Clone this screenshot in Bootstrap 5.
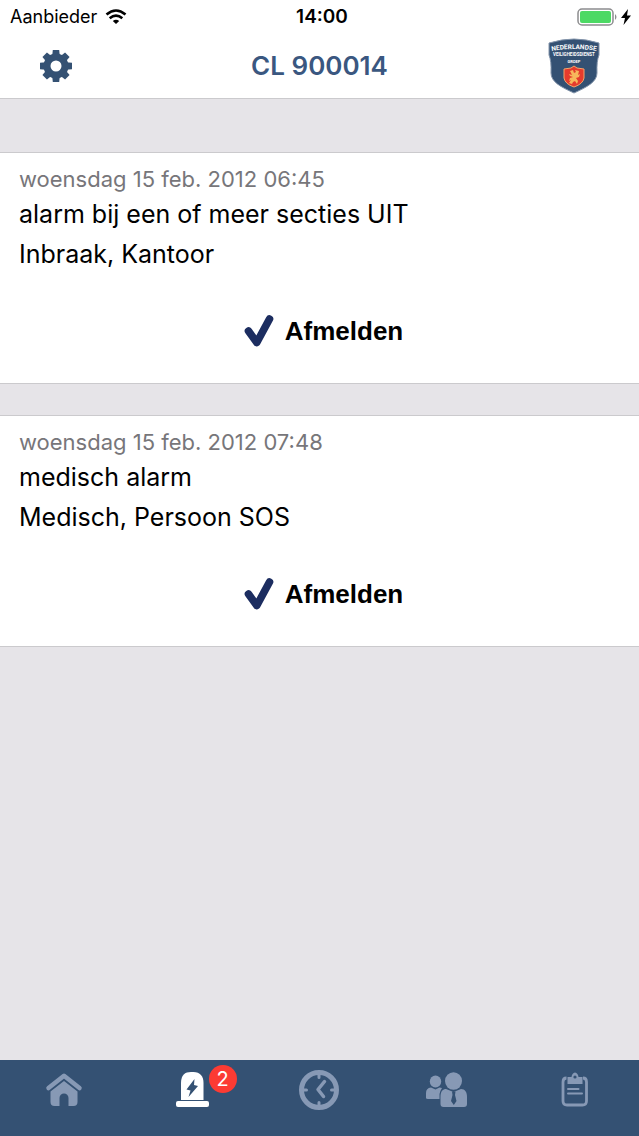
<!DOCTYPE html>
<html lang="nl">
<head>
<meta charset="utf-8">
<meta name="viewport" content="width=device-width, initial-scale=1">
<title>CL 900014</title>
<link rel="stylesheet" href="https://cdn.jsdelivr.net/npm/bootstrap@5.3.0/dist/css/bootstrap.min.css">
<style>
  :root { --brand: #345173; --line: #cbcacd; --canvas: #e6e4e8; }
  body { font-family: Inter, "Liberation Sans", sans-serif; color: #000; background: var(--canvas); }
  svg { display: block; flex: none; }
  .status-bar { height: 33px; font-size: 18px; line-height: 33px; padding: 0 8px 0 10px; }
  .clock { font-size: 19px; padding-left: 3px; }
  .title-bar { min-height: 66px; border-bottom: 1px solid var(--line); padding: 0 39px; }
  .title-bar h1 { font-size: 26px; line-height: 32px; color: #3a5780; }
  .icon-btn { color: var(--brand); border: 0; }
  .alarms { padding-top: 53px; gap: 31px; }
  .alarm { min-height: 232px; border: solid var(--line); border-width: 1px 0; padding: 10px 19px 0; font-size: 25px; line-height: 40px; }
  .alarm time { font-size: 22px; line-height: 32px; color: #77767a; }
  .alarm h2 { font-size: 25px; line-height: 40px; margin-top: -1px; }
  .sign-off { font: bold 26px/40px "Liberation Sans", Arial, sans-serif; gap: 11px; margin-top: 37px; padding: 0 0 0 8px; border: 0; }
  .tab-bar { height: 76px; background: var(--brand); }
  .tab-bar a { color: #8799b5; padding-top: 9px; }
  .tab-bar a.active { color: #fff; }
  .count { left: 50%; top: 5px; margin-left: 17px; width: 28px; height: 28px; font-size: 20px; line-height: 28px; background: #fc3b33; color: #fff; }
</style>
</head>
<body class="d-flex flex-column min-vh-100">
<header class="bg-white">
  <div class="status-bar row g-0">
    <div class="col d-flex align-items-center gap-2">
      <span>Aanbieder</span>
      <svg width="22" height="16" viewBox="0 0 22 16" fill="none" stroke="#000" stroke-width="2.600" role="img" aria-label="Wifi">
        <path d="M1.500 5.500Q11-2.500 20.500 5.500M4.700 9.300Q11 4 17.300 9.300"/><path d="M7.800 12Q11 9.300 14.200 12L11 15Z" fill="#000" stroke="none"/>
      </svg>
    </div>
    <div class="clock col-auto fw-semibold">14:00</div>
    <div class="col d-flex align-items-center justify-content-end gap-1">
      <svg width="40" height="18" viewBox="0 0 40 18" role="img" aria-label="Batterij vol">
        <rect x="1" y="1" width="35" height="16" rx="4" fill="#fff" stroke="#8c8c8e" stroke-width="1.500"/>
        <rect x="3" y="3" width="31" height="12" rx="2" fill="#4cd964"/><path d="M38 6q3 3 0 6z" fill="#8c8c8e"/>
      </svg>
      <svg width="10" height="16" viewBox="0 0 10 16" aria-hidden="true"><path d="M7 0 0 9h4L2.500 16 10 6.500H6z"/></svg>
    </div>
  </div>
  <div class="title-bar row g-0 align-items-center">
    <div class="col">
      <button type="button" class="icon-btn d-block bg-transparent p-0" aria-label="Instellingen">
        <svg width="34" height="34" viewBox="-17 -17 34 34" fill="currentColor">
          <defs><path id="tooth" d="M-3.800-10 L-3.200-16 H3.200 L3.800-10Z"/></defs>
          <circle r="9" fill="none" stroke="currentColor" stroke-width="7"/>
          <use href="#tooth"/><use href="#tooth" transform="rotate(45)"/><use href="#tooth" transform="rotate(90)"/><use href="#tooth" transform="rotate(135)"/><use href="#tooth" transform="rotate(180)"/><use href="#tooth" transform="rotate(225)"/><use href="#tooth" transform="rotate(270)"/><use href="#tooth" transform="rotate(315)"/>
        </svg>
      </button>
    </div>
    <h1 class="col-auto m-0 fw-semibold">CL 900014</h1>
    <div class="col d-flex justify-content-end">
      <svg width="52" height="56" viewBox="0 0 52 56" role="img" aria-label="Nederlandse Veiligheidsdienst Groep">
        <path d="M1 5Q14 1 26 1T51 5V17Q48.500 23 49 35C49 44 39 49 26 55C13 49 3 44 3 35Q3.500 23 1 17Z" fill="#345173" stroke="#8495ab" stroke-width="1"/>
        <g fill="#fff" font-family="Roboto, sans-serif" font-weight="700">
          <path id="arc" d="M1 13.500Q26 8.500 51 13.500" fill="none"/>
          <text font-size="6.500" text-anchor="middle"><textPath href="#arc" startOffset="50%">NEDERLANDSE</textPath></text>
          <text x="26" y="18" font-size="4.500" text-anchor="middle">VEILIGHEIDSDIENST</text>
          <text x="26" y="24.500" font-size="4" text-anchor="middle">GROEP</text>
        </g>
        <path d="M26 28 29 30 36 31V40Q35 46 26 49Q17 46 16 40V31L23 30Z" fill="#e53b2d" stroke="#f3a46a" stroke-width="1"/>
        <path d="M22 33l3-1 1 3 2-1-1-2 4 1-1 4 2-1-1 3-3 1 2 3-1 3-2-3-2 1-1 2-3-1 2-3-2 1 1-3 3-1-3-1-1-2 3 1z" fill="#f7b75b"/>
      </svg>
    </div>
  </div>
</header>

<main class="alarms flex-grow-1 d-flex flex-column">
  <article class="alarm bg-white">
    <time class="d-block" datetime="2012-02-15T06:45">woensdag 15 feb. 2012 06:45</time>
    <h2 class="mb-0 fw-normal">alarm bij een of meer secties UIT</h2>
    <p class="mb-0">Inbraak, Kantoor</p>
    <button type="button" class="sign-off d-flex align-items-center mx-auto bg-transparent">
      <svg width="30" height="34" viewBox="0 0 30 34" fill="none" stroke="#1c2d60" stroke-width="7.600" stroke-linecap="round" stroke-linejoin="round" aria-hidden="true"><path d="M4.500 17 12.800 28.500 25.500 5"/></svg>
      Afmelden
    </button>
  </article>
  <article class="alarm bg-white">
    <time class="d-block" datetime="2012-02-15T07:48">woensdag 15 feb. 2012 07:48</time>
    <h2 class="mb-0 fw-normal">medisch alarm</h2>
    <p class="mb-0">Medisch, Persoon SOS</p>
    <button type="button" class="sign-off d-flex align-items-center mx-auto bg-transparent">
      <svg width="30" height="34" viewBox="0 0 30 34" fill="none" stroke="#1c2d60" stroke-width="7.600" stroke-linecap="round" stroke-linejoin="round" aria-hidden="true"><path d="M4.500 17 12.800 28.500 25.500 5"/></svg>
      Afmelden
    </button>
  </article>
</main>

<nav class="tab-bar d-flex sticky-bottom" aria-label="Hoofdmenu">
  <a href="#home" class="flex-fill w-100 d-flex justify-content-center" aria-label="Home">
    <svg width="42" height="42" viewBox="0 0 42 42" fill="currentColor">
      <path d="M5.500 19 21 6.800 36.500 19" fill="none" stroke="currentColor" stroke-width="4.500" stroke-linecap="round" stroke-linejoin="round"/>
      <path d="M7.500 22.500 21 12 34.500 22.500V33a4 4 0 0 1-4 4H25.500V29a4.500 4.500 0 0 0-9 0V37H11.500a4 4 0 0 1-4-4Z"/>
    </svg>
  </a>
  <a href="#alarmen" class="active flex-fill w-100 d-flex justify-content-center position-relative" aria-label="Alarmen" aria-current="page">
    <svg width="42" height="42" viewBox="0 0 42 42" fill="currentColor">
      <path d="M10 31V14C10 6 14 3 20 3h2.500C29 3 32.500 7 32.500 14V31Z"/><rect x="5" y="32" width="33" height="6" rx="2"/>
      <path d="M23.500 10 15.500 20.500l4 1L17.500 28l9.500-11-4-1Z" fill="#345173"/>
    </svg>
    <span class="count position-absolute rounded-circle text-center">2</span>
  </a>
  <a href="#historie" class="flex-fill w-100 d-flex justify-content-center" aria-label="Historie">
    <svg width="42" height="42" viewBox="0 0 42 42" fill="none" stroke="currentColor">
      <circle cx="21" cy="21" r="17.500" stroke-width="5"/>
      <path d="M21 5v3.500M21 33.500V37M5 21h3.500M33.500 21H37" stroke-width="3" stroke-linecap="round"/>
      <path d="M26.500 12.500 20 20.500 25.500 27.500" stroke-width="3.500" stroke-linecap="round" stroke-linejoin="round"/>
    </svg>
  </a>
  <a href="#contacten" class="flex-fill w-100 d-flex justify-content-center" aria-label="Contacten">
    <svg width="42" height="42" viewBox="0 0 42 42" fill="currentColor">
      <ellipse cx="9.500" cy="12.500" rx="5.700" ry="6"/><path d="M0 29V24q0-5 5-5.500l4.500 2 4-2 2.500.5q-2 3-2.500 6V30H2Q0 30 0 29Z"/>
      <ellipse cx="27.500" cy="12" rx="8.500" ry="8.800"/>
      <path d="M14.500 35V28C14.500 22 17 20 20 20l7.500 3 7.500-3C39 20 41 23 41 28V35q0 3-3 3H17.500q-3 0-3-3Z"/>
      <path d="M26 22.500h3.500L29 26l1.500 6-2.700 4-2.800-4L26.500 26Z" fill="#345173"/>
    </svg>
  </a>
  <a href="#logboek" class="flex-fill w-100 d-flex justify-content-center" aria-label="Logboek">
    <svg width="42" height="42" viewBox="0 0 42 42" fill="none" stroke="currentColor">
      <path d="M12.500 9Q9 9 9 13V32q0 4 4 4H28.500q4 0 4-4V13q0-4-3.500-4" stroke-width="2.800"/>
      <path d="M13.500 8h4q.5-4 3.500-4.500 3 .5 3.500 4.500h4v7h-15Z" fill="currentColor" stroke="none"/><circle cx="21" cy="8" r="1.600" fill="#345173" stroke="none"/>
      <path d="M14 20h10.500M14 24.500h14" stroke-width="2" stroke-linecap="round"/>
    </svg>
  </a>
</nav>
<script src="https://cdn.jsdelivr.net/npm/bootstrap@5.3.0/dist/js/bootstrap.bundle.min.js"></script>
</body>
</html>
